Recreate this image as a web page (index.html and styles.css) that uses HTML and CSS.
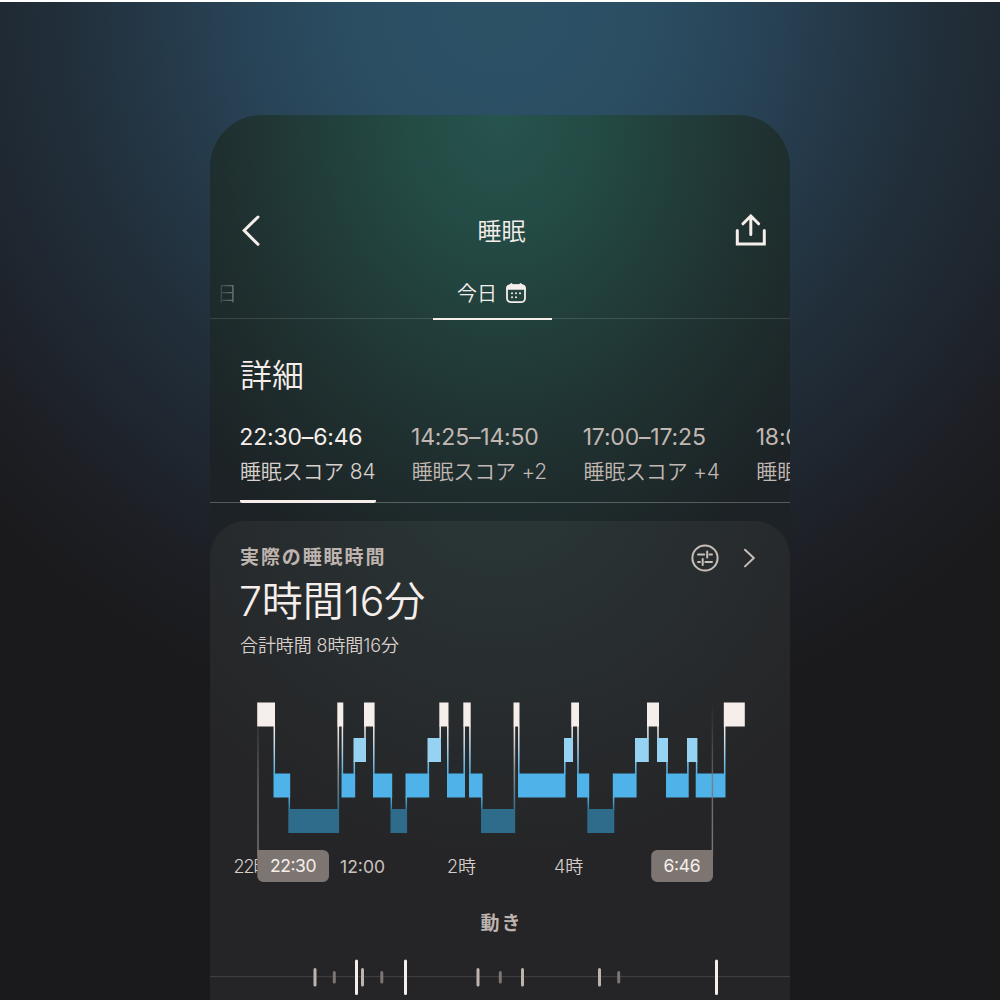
FILE: index.html
```html
<!DOCTYPE html>
<html lang="ja">
<head>
<meta charset="utf-8">
<title>睡眠</title>
<link rel="stylesheet" href="styles.css">
</head>
<body>
<main class="stage">
  <section class="phone">
    <header class="topbar">
      <svg class="back" width="20" height="34" viewBox="0 0 20 34"><path d="M16 3 L2.2 16.5 L16 30.3"/></svg>
      <h1 class="title">睡眠</h1>
      <svg class="share" width="32" height="34" viewBox="0 0 32 34"><path d="M2.3 16.5 V30 H29.3 V16.5 M15.8 20.5 V2.3 M8 9.8 L15.8 2 L23.6 9.8"/></svg>
    </header>
    <nav class="days">
      <span class="day-prev">日</span>
      <span class="day-now">今日
        <svg width="22" height="22" viewBox="0 0 22 22"><rect x="2" y="2.2" width="18" height="17" rx="4" class="cal-box"/><path class="cal-fill" d="M1.1 6.8 V5.2 Q1.1 1.4 5 1.4 H5.4 V.4 Q6.4 -.6 7.4 .4 V1.4 H14.6 V.4 Q15.6 -.6 16.6 .4 V1.4 H17 Q20.9 1.4 20.9 5.2 V6.8Z"/><path class="cal-dots" d="M7 10.2h.01M11 10.2h.01M15 10.2h.01M7 14.2h.01M11 14.2h.01"/></svg>
      </span>
    </nav>
    <h2 class="heading">詳細</h2>
    <nav class="periods">
      <div class="period active"><span class="time">22:30–6:46</span><span class="score">睡眠スコア 84</span></div>
      <div class="period"><span class="time">14:25–14:50</span><span class="score">睡眠スコア +2</span></div>
      <div class="period"><span class="time">17:00–17:25</span><span class="score">睡眠スコア +4</span></div>
      <div class="period"><span class="time">18:0</span><span class="score">睡眠</span></div>
    </nav>
    <article class="card">
      <div class="card-head">
        <h3 class="label">実際の睡眠時間</h3>
        <div class="actions">
          <svg width="28" height="28" viewBox="0 0 28 28"><circle cx="14" cy="14" r="12.6"/><path d="M7 10.4h6.2M18.6 10.4h2.4M16.2 7.4v6M7 17.9h2M14.4 17.9h6.6M11.7 14.9v6"/></svg>
          <svg width="14" height="22" viewBox="0 0 14 22"><path d="M2 2.8 L10.8 11 L2 19.4"/></svg>
        </div>
      </div>
      <p class="total">7時間16分</p>
      <p class="sub">合計時間 8時間16分</p>
      <svg class="chart" width="580" height="210" viewBox="210 690 580 210">
        <defs>
          <linearGradient id="stage-fade" gradientUnits="userSpaceOnUse" x1="0" y1="726" x2="0" y2="812">
            <stop offset="0" stop-color="#f6eeea"/><stop offset=".22" stop-color="#bfd9e8"/><stop offset=".55" stop-color="#4fb2e8"/><stop offset=".83" stop-color="#4fb2e8"/><stop offset="1" stop-color="#2f6c8b"/>
          </linearGradient>
          <linearGradient id="deep-fade" gradientUnits="userSpaceOnUse" x1="0" y1="726" x2="0" y2="809">
            <stop offset="0" stop-color="#f6eeea"/><stop offset=".55" stop-color="#858b8f"/><stop offset="1" stop-color="#316f8e"/>
          </linearGradient>
          <linearGradient id="mark-fade" gradientUnits="userSpaceOnUse" x1="0" y1="702" x2="0" y2="850">
            <stop offset="0" stop-color="#7d7572" stop-opacity="0"/><stop offset=".6" stop-color="#7d7572" stop-opacity=".85"/><stop offset="1" stop-color="#7d7572"/>
          </linearGradient>
        </defs>
        <path class="links" d="M274.3 726V774M289.3 797V810M342.4 726V774M354.3 761V774M365 726V739M373.8 726V774M391.3 797V810M406.3 797V810M428.3 761V774M440.2 726V739M447.8 726V774M464.2 726V774M469.9 726V774M481.8 797V810M518.8 726V774M564.8 761V774M572.2 726V739M578 726V774M588.3 797V810M613.6 797V810M635.8 761V774M647.9 726V739M658 726V739M667 761V774M687.9 761V774M696.6 761V774M724.7 726V774"/>
        <path class="links-deep" d="M338.3 726V810M514.4 726V810"/>
        <path class="awake" d="M257.2 702.5h17.8v24h-17.8zM337.3 702.5h6v24h-6zM364 702.5h10.6v24h-10.6zM439.3 702.5h9.2v24h-9.2zM463.3 702.5h7.4v24h-7.4zM513.5 702.5h6v24h-6zM571.2 702.5h7.8v24h-7.8zM647 702.5h12v24h-12zM723.8 702.5h21v24h-21z"/>
        <path class="rem" d="M353.5 738h12.5v24h-12.5zM427.5 738h13.5v24h-13.5zM564 738h9v24h-9zM635 738h13.8v24h-13.8zM657 738h11v24h-11zM687 738h10.4v24h-10.4z"/>
        <path class="light" d="M273.5 773.5h16.7v24h-16.7zM341.5 773.5h13.7v24h-13.7zM373 773.5h19.2v24h-19.2zM405.5 773.5h23.7v24h-23.7zM447 773.5h18v24h-18zM469 773.5h13.5v24h-13.5zM518 773.5h47.5v24h-47.5zM577 773.5h12.2v24h-12.2zM612.8 773.5h23.8v24h-23.8zM666 773.5h22.7v24h-22.7zM695.7 773.5h29.8v24h-29.8z"/>
        <path class="deep" d="M288.3 809h50.8v24h-50.8zM390.5 809h16.6v24h-16.6zM481 809h34.2v24h-34.2zM587.3 809h27v24h-27z"/>
        <rect x="257.3" y="726" width="1.4" height="130" fill="url(#mark-fade)"/>
        <rect x="711.7" y="702" width="1.4" height="154" fill="url(#mark-fade)"/>
        <g class="axis">
          <text x="233.5" y="873" textLength="38">22時</text>
          <text class="num" x="340" y="873" textLength="45">12:00</text>
          <text x="447" y="873">2時</text>
          <text x="554" y="873">4時</text>
        </g>
        <path class="tag" d="M257.3 850H323a6 6 0 0 1 6 6v20a6 6 0 0 1-6 6H263.3a6 6 0 0 1-6-6zM657.2 850H713v26a6 6 0 0 1-6 6H657.2a6 6 0 0 1-6-6v-20a6 6 0 0 1 6-6z"/>
        <g class="tag-text">
          <text x="270" y="872.4" textLength="46.5">22:30</text>
          <text x="663.5" y="872.4" textLength="37">6:46</text>
        </g>
      </svg>
      <h3 class="label movement">動き</h3>
      <svg class="motion" width="580" height="50" viewBox="210 950 580 50">
        <path class="base" d="M210 976.7H790"/>
        <path class="high" d="M356.5 961V993.5M405.5 961V993.5M716.5 961V993.5"/>
        <path class="mid" d="M315 969.5V985M362.5 969.5V985M478 969.5V985M522.5 969.5V985M599.5 969.5V985"/>
        <path class="low" d="M334.3 972.5V982M381.8 972.5V982M500.3 972.5V982M618.7 972.5V982"/>
      </svg>
    </article>
  </section>
</main>
</body>
</html>
```
FILE: styles.css
```css
* { box-sizing: border-box; margin: 0; padding: 0; }

body {
  height: 1000px;
  overflow: hidden;
  font-family: Inter, "Noto Sans CJK JP", sans-serif;
  font-weight: 350;
  color: #f6eeea;
}

.stage {
  height: 1000px;
  border-top: 2px solid #fff;
  padding: 113px 210px 0;
  background: radial-gradient(ellipse 720px 740px at 500px 0, #2c5165 0, #2b4e63 20%, #284356 36%, #243746 50%, #212e39 62%, #1f2730 74%, #1d1f25 86%, #1a1a1c 100%);
}

.phone {
  height: 885px;
  overflow: hidden;
  border-radius: 52px 52px 0 0;
  background: radial-gradient(ellipse 400px 500px at 290px 0, #26544d 0, #244b45 23%, #213c39 48%, #1f2e2e 72%, #1d2628 90%, #1c2225 100%);
}

svg { display: block; fill: none; }

.topbar {
  display: flex;
  align-items: center;
  justify-content: space-between;
  height: 60px;
  margin-top: 86px;
  padding: 0 23px 0 32px;
}
.back, .share { stroke: #f6eeea; stroke-width: 3; stroke-linecap: round; }
.title { font-size: 24px; font-weight: 350; line-height: 34px; padding: 2px 0 0 6px; }

.days {
  display: grid;
  grid-template-columns: 223px 119px;
  grid-template-rows: 58px;
  height: 58px;
  background: linear-gradient(#ffffff20, #ffffff20) 0 57px / 100% 1px no-repeat;
}
.day-prev {
  padding-left: 7px;
  font-size: 20px;
  line-height: 67px;
  color: #a0a5a3;
  -webkit-mask-image: linear-gradient(90deg, transparent 3px, #000a 26px);
  mask-image: linear-gradient(90deg, transparent 3px, #000a 26px);
}
.day-now {
  display: flex;
  align-items: center;
  gap: 8px;
  height: 59px;
  padding: 8px 0 0 24px;
  border-bottom: 2px solid #f6eeea;
  font-size: 20px;
  line-height: 30px;
}
.day-now svg { overflow: visible; }
.cal-box { stroke: #f6eeea; stroke-width: 1.8; }
.cal-fill { fill: #f6eeea; }
.cal-dots { stroke: #f6eeea; stroke-width: 2; stroke-linecap: round; }

.heading { margin: 33px 0 0 30px; font-size: 32px; font-weight: 350; line-height: 48px; }

.periods {
  display: flex;
  gap: 36px;
  height: 86px;
  margin-top: 17px;
  padding-left: 30px;
  background: linear-gradient(#ffffff42, #ffffff42) 0 85px / 100% 1px no-repeat;
}
.period {
  flex: 0 0 135.7px;
  min-width: 0;
  color: #c1b8b3;
  white-space: nowrap;
}
.period:last-child { margin-left: 1.3px; }
.period.active { color: #f6eeea; border-bottom: 3px solid #f6eeea; border-radius: 2px; }
.active .score { color: #d8d0cc; }
.time { display: block; margin-left: -.7px; font-size: 23px; font-weight: 400; line-height: 40px; letter-spacing: -.18px; }
.score { display: block; font-size: 21px; line-height: 30px; letter-spacing: -.18px; }

.card {
  height: 479px;
  margin-top: 18px;
  border-radius: 36px 36px 0 0;
  background: radial-gradient(circle 400px at 290px -60px, #2a3938 0, #282e30 50%, #252527 100%);
}
.card-head {
  display: flex;
  justify-content: space-between;
  height: 50px;
  padding: 22px 33px 0 30px;
}
.label { font-size: 19px; font-weight: 700; line-height: 30px; letter-spacing: 1.9px; color: #beb4af; }
.actions {
  display: flex;
  align-items: center;
  gap: 24px;
  height: 28px;
  padding-top: 2px;
  stroke: #c9bfba;
  stroke-width: 2;
  stroke-linecap: round;
}
.total { padding-left: 29px; font-size: 41px; line-height: 60px; letter-spacing: -.1px; }
.sub { padding-left: 30px; font-size: 18px; line-height: 30px; letter-spacing: -.1px; color: #d8d0cc; }

.chart { margin-top: 29px; }
.links { stroke: url(#stage-fade); stroke-width: 1.5; }
.links-deep { stroke: url(#deep-fade); stroke-width: 1.6; }
.awake { fill: #f6eeea; }
.rem { fill: #96d2f2; }
.light { fill: #4fb2e8; }
.deep { fill: #2f6c8b; }
.axis { font-size: 18px; fill: #d5cdc9; }
.axis .num { font-size: 17.5px; font-weight: 400; fill: #c9c1bd; }
.tag { fill: #7d7572; }
.tag-text { font-size: 17.5px; font-weight: 400; fill: #f6eeea; }

.movement { margin-top: 9px; padding-left: 3px; text-align: center; }
.motion { margin-top: 11px; stroke-width: 3; stroke-linecap: round; }
.base { stroke: #3c3b3d; stroke-width: 1.2; }
.high { stroke: #f6eeea; }
.mid { stroke: #beb4af; }
.low { stroke: #7d7572; }
```
